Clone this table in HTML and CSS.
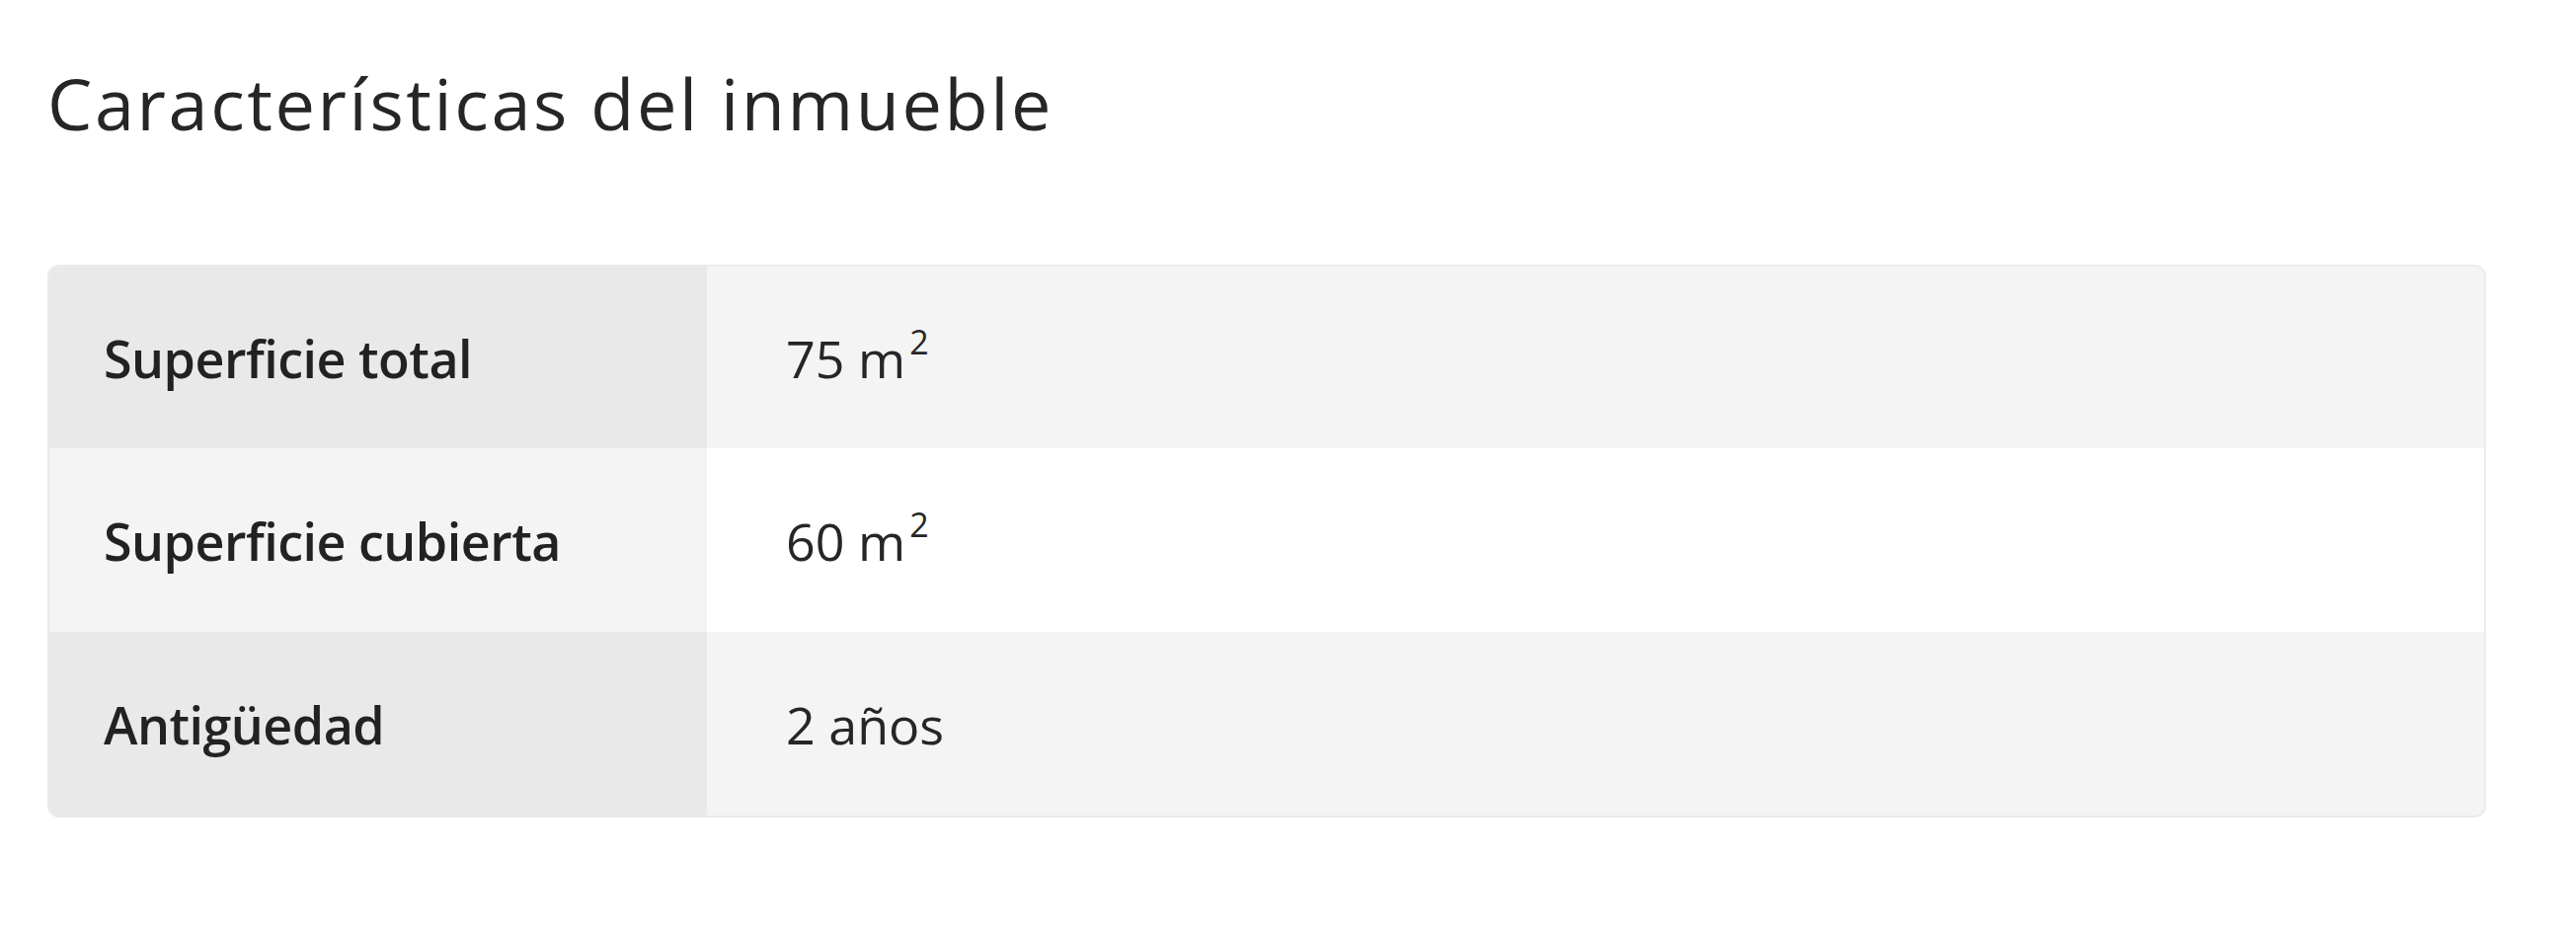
FILE: index.html
```html
<!DOCTYPE html>
<html lang="es">
<head>
<meta charset="utf-8">
<title>Características del inmueble</title>
<link rel="stylesheet" href="styles.css">
</head>
<body>
<section class="features">
  <h2 class="features-title">Características del inmueble</h2>
  <div class="features-table">
    <div class="row row-odd">
      <div class="cell label">Superficie total</div>
      <div class="cell value">75 m<sup>2</sup></div>
    </div>
    <div class="row row-even">
      <div class="cell label">Superficie cubierta</div>
      <div class="cell value">60 m<sup>2</sup></div>
    </div>
    <div class="row row-odd">
      <div class="cell label">Antigüedad</div>
      <div class="cell value">2 años</div>
    </div>
  </div>
</section>
</body>
</html>
```
FILE: styles.css
```css
html, body {
  margin: 0;
  padding: 0;
  background: #ffffff;
}

body {
  font-family: "Open Sans", "Liberation Sans", Arial, sans-serif;
  color: #222222;
}

.features {
  padding: 61px 91px 0 48px;
}

.features-title {
  margin: 0;
  font-size: 72px;
  line-height: 86px;
  font-weight: 400;
  letter-spacing: 2.6px;
  color: #262626;
}

.features-table {
  margin-top: 121px;
  border: 2px solid #ebebeb;
  border-radius: 12px;
  overflow: hidden;
}

.row {
  display: grid;
  grid-template-columns: 666px 1fr;
  height: 186px;
}

.row:first-child {
  height: 184px;
}

.cell {
  display: flex;
  align-items: center;
  font-size: 52px;
}

.label {
  padding-left: 55px;
  font-weight: 600;
  letter-spacing: -0.5px;
  color: #222222;
}

.value {
  padding-left: 80px;
  font-weight: 400;
  color: #262626;
}

.row-odd .label {
  background: #e9e9e9;
}

.row-odd .value {
  background: #f4f4f4;
}

.row-even .label {
  background: #f4f4f4;
}

.row-even .value {
  background: #ffffff;
}

.value sup {
  font-size: 34px;
  line-height: 0;
  vertical-align: baseline;
  position: relative;
  top: -16px;
  margin-left: 4px;
}
```
